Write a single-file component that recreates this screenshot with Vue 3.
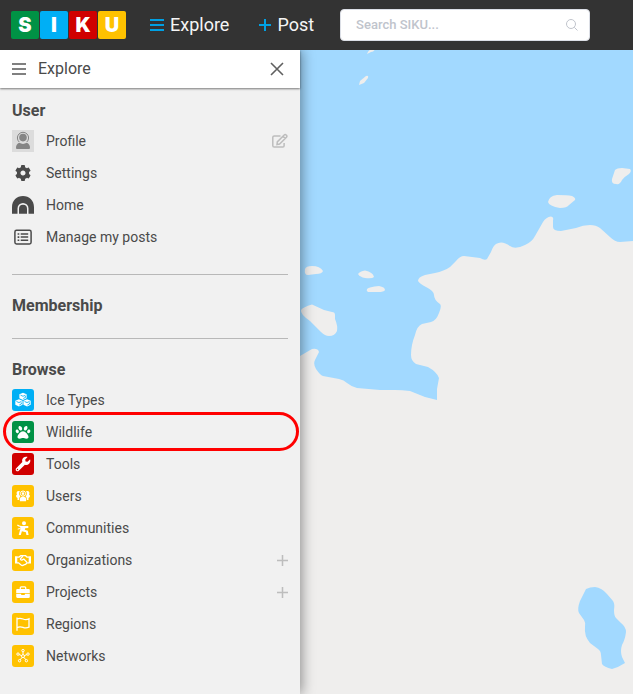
<script setup>
import { ref } from 'vue'

const query = ref('')

const logo = [
  { letter: 'S', tone: 'green' },
  { letter: 'I', tone: 'blue' },
  { letter: 'K', tone: 'red' },
  { letter: 'U', tone: 'yellow' },
]

// Each icon is a list of paths; `line` paths are stroked, the others filled.
const icons = {
  ice: {
    box: '0.7 0.7 20.6 20.6',
    paths: [
      { d: 'M11 4.200l3.400 1.500v3.700L11 11 7.600 9.400V5.700zM7.200 10.200l3.400 1.600v3.700l-3.400 1.700-3.400-1.700v-3.700zM14.800 10.200l3.400 1.600v3.700l-3.400 1.700-3.400-1.700v-3.700z' },
      { d: 'M8.700 6.500L11 7.500l2.300-1M11.300 9.600l2-1V7.400M4.900 12.400l2.300 1 2.300-1M7.500 15.700l2-1v-1.300M12.500 12.400l2.300 1 2.300-1M15.100 15.700l2-1v-1.300', line: true, tint: 'cut-blue' },
    ],
  },
  paw: {
    box: '-128 -138 768 768',
    paths: [{ d: 'M256 224c-79.410 0-192 122.760-192 200.250 0 34.900 26.810 55.750 71.740 55.750 48.840 0 81.090-25.080 120.260-25.080 39.510 0 71.850 25.080 120.260 25.080 44.930 0 71.740-20.850 71.740-55.750C448 346.760 335.410 224 256 224zm-147.280-12.610c-10.400-34.650-42.440-57.090-71.560-50.130-29.120 6.960-44.290 40.690-33.890 75.340 10.400 34.650 42.440 57.090 71.560 50.130 29.120-6.960 44.290-40.690 33.890-75.340zm84.720-20.780c30.940-8.140 42.930-49.080 26.190-91.570s-55.740-70.100-86.680-61.960c-30.950 8.140-42.940 49.080-26.200 91.570 16.740 42.480 55.740 70.100 86.690 61.960zm281.410-29.350c-29.120-6.960-61.150 15.480-71.560 50.130-10.400 34.650 4.770 68.380 33.890 75.340 29.120 6.960 61.150-15.480 71.560-50.130 10.400-34.650-4.770-68.380-33.890-75.340zm-156.270 29.350c30.940 8.140 69.940-19.470 86.680-61.960 16.740-42.490 4.750-83.420-26.190-91.570-30.950-8.140-69.950 19.480-86.690 61.960-16.740 42.490-4.740 83.430 26.200 91.570z' }],
  },
  wrench: {
    box: '-128 -128 768 768',
    paths: [{ d: 'M507.730 109.100c-2.240-9.030-13.540-12.090-20.120-5.510l-74.360 74.360-67.880-11.310-11.310-67.880 74.360-74.360c6.620-6.620 3.430-17.900-5.660-20.160-47.380-11.740-99.550.91-136.580 37.930-39.640 39.640-50.550 97.100-34.050 147.200L18.740 402.760c-24.990 24.990-24.990 65.510 0 90.500 24.990 24.990 65.510 24.990 90.500 0l213.210-213.210c50.120 16.710 107.470 5.680 147.370-34.220 37.070-37.070 49.700-89.320 37.910-136.730zM64 472c-13.250 0-24-10.750-24-24 0-13.260 10.750-24 24-24s24 10.740 24 24c0 13.250-10.750 24-24 24z' }],
  },
  users: {
    box: '0 0 22 22',
    paths: [
      { d: 'M6.800 5.900a2.200 2.200 0 0 1 1.200.4 4 4 0 0 0 .3 5.100c-.9.700-1.200 1.800-1.200 3.700H5.500V12.900c-.9-.3-1.400-.9-1.400-1.900 0-.8.4-1.400 1-1.600a2.100 2.100 0 0 1 1.700-3.500zM15.200 5.900a2.200 2.200 0 0 0-1.200.4 4 4 0 0 1-.3 5.100c.9.700 1.200 1.800 1.200 3.700h1.600V12.900c.9-.3 1.400-.9 1.400-1.900 0-.8-.4-1.400-1-1.600a2.100 2.100 0 0 0-1.700-3.500z' },
      { d: 'M7.900 16.200v-2c0-1.600 1.300-2.400 3.100-2.400s3.100.8 3.100 2.400v2z' },
      { d: 'M11 6a2.600 2.600 0 1 1 0 5.200 2.600 2.600 0 0 1 0-5.200z', line: true },
      { d: 'M11 7.300a1.300 1.300 0 1 1 0 2.600 1.300 1.300 0 0 1 0-2.600z' },
    ],
  },
  community: {
    box: '0 0 22 22',
    paths: [
      { d: 'M12 4.300a2 2 0 1 1 0 4 2 2 0 0 1 0-4zM5.700 7.400c1.500 1 2.900 1.500 4.300 1.500l6.300.2v1.900l-3.100.3-.4 1.500 3 1 .8 4.200h-2.200l-.5-2.700-4-1.100-1.100 3.800H6.700l1.400-5.300.9-1.200-1-.4.5-1C7.200 9.800 6 9.200 5 8.400z' },
      { d: 'M8.700 11.400l-3 .7', line: true },
    ],
  },
  handshake: {
    box: '0 0 22 22',
    paths: [
      { d: 'M3 7.300h2.300v7.200H3zM16.700 7.300H19v7.200h-2.300z' },
      { d: 'M5 8.100h2l1.800-1.400h4.700L15 8.100h2M5 13.800h1.500l2.300 2c1 .8 2.200.8 3 .1l1.700-.5 1.700-1.600H17M10.800 7.300L8.600 9.600c-.5.700.2 1.700 1.200 1.500l2-1 3.100 3.100', line: true, tint: 'bold' },
    ],
  },
  briefcase: {
    box: '0 0 22 22',
    paths: [
      { d: 'M4.200 9.200c0-.8.500-1.300 1.300-1.300h11c.8 0 1.300.5 1.300 1.300v2.700H4.200zM4.200 12.800h5v1.100h3.600v-1.100h5v2.900c0 .8-.5 1.200-1.300 1.200h-11c-.8 0-1.300-.4-1.300-1.200z' },
      { d: 'M8.300 8V6.700c0-.6.3-.9.9-.9h3.600c.6 0 .9.300.9.900V8', line: true, tint: 'bold' },
    ],
  },
  flag: {
    box: '0 0 22 22',
    paths: [{ d: 'M5 4.500v13.200M5 6c2.200-1.100 4-.8 6 0s3.900.8 6-.2v8.400c-2.100 1-4 1-6 .2s-3.800-1-6 .2', line: true, tint: 'bold' }],
  },
  network: {
    box: '0 0 22 22',
    paths: [
      { d: 'M11 9.600a1.500 1.500 0 1 1 0 3 1.500 1.500 0 0 1 0-3zM11 9.500V7M12.500 10.500l2.400-.9M12 12.400l1.700 2.300M10 12.400l-1.700 2.300M9.500 10.500l-2.400-.9M11 4.400a1.200 1.200 0 1 1 0 2.400 1.200 1.200 0 0 1 0-2.400zM16 7.900a1.200 1.200 0 1 1 0 2.400 1.200 1.200 0 0 1 0-2.400zM14.400 14.500a1.200 1.200 0 1 1 0 2.400 1.200 1.200 0 0 1 0-2.400zM7.600 14.500a1.200 1.200 0 1 1 0 2.400 1.200 1.200 0 0 1 0-2.400zM6 7.900a1.200 1.200 0 1 1 0 2.400 1.200 1.200 0 0 1 0-2.400z', line: true },
    ],
  },
  person: {
    box: '0 0 22 22',
    paths: [
      { d: 'M11 3.800a3.800 3.800 0 1 1 0 7.600 3.800 3.800 0 0 1 0-7.600zM7.300 12.800c2.300 1.500 5.100 1.500 7.400 0 2.200.8 3.300 2.600 3.300 4.900 0 .8-.5 1.300-1.200 1.300H5.200c-.7 0-1.200-.5-1.200-1.300 0-2.300 1.100-4.100 3.300-4.900z' },
      { d: 'M7.200 12a5.600 5.600 0 1 1 7.600 0', line: true },
    ],
  },
  gear: {
    box: '-90 -90 692 692',
    paths: [{ d: 'M487.400 315.700l-42.600-24.600c4.300-23.200 4.300-47 0-70.200l42.600-24.600c4.900-2.800 7.100-8.600 5.500-14-11.100-35.600-30-67.800-54.700-94.600-3.800-4.100-10-5.100-14.800-2.300L380.800 110c-17.900-15.400-38.500-27.300-60.800-35.100V25.800c0-5.600-3.900-10.500-9.400-11.700-36.700-8.200-74.300-7.800-109.200 0-5.500 1.200-9.400 6.100-9.400 11.700V75c-22.200 7.900-42.800 19.800-60.800 35.100L88.700 85.500c-4.900-2.800-11-1.900-14.800 2.300-24.700 26.700-43.600 58.900-54.700 94.600-1.700 5.400.6 11.200 5.500 14L67.300 221c-4.300 23.200-4.300 47 0 70.200l-42.600 24.600c-4.900 2.800-7.100 8.600-5.500 14 11.100 35.600 30 67.800 54.700 94.600 3.800 4.100 10 5.100 14.800 2.300l42.600-24.600c17.900 15.400 38.500 27.300 60.800 35.100v49.200c0 5.600 3.900 10.500 9.400 11.700 36.700 8.200 74.300 7.800 109.200 0 5.500-1.200 9.400-6.100 9.400-11.700v-49.200c22.200-7.900 42.800-19.800 60.800-35.100l42.600 24.600c4.900 2.800 11 1.900 14.800-2.300 24.700-26.700 43.600-58.900 54.700-94.600 1.500-5.500-.7-11.300-5.600-14.100zM256 336c-44.100 0-80-35.900-80-80s35.900-80 80-80 80 35.900 80 80-35.900 80-80 80z' }],
  },
  igloo: {
    box: '0 0 22 22',
    paths: [
      { d: 'M0 19.700v-6.500C0 6.400 4.800 2 11 2s11 4.400 11 11.200v6.500h-5.500v-5.200a5.500 5.500 0 0 0-11 0v5.200z' },
      { d: 'M7 19.700v-4.900a4 4 0 0 1 8 0v4.900z' },
    ],
  },
  list: {
    box: '0 0 22 22',
    paths: [
      { d: 'M4.500 4.300h13c1 0 1.600.6 1.600 1.600v10.400c0 1-.6 1.600-1.600 1.600h-13c-1 0-1.600-.6-1.600-1.600V5.900c0-1 .6-1.600 1.600-1.600zM8.700 8h7.500M8.700 11.100h7.500M8.700 14.200h7.500', line: true },
      { d: 'M5.600 7.200h1.700v1.600H5.600zM5.600 10.300h1.700v1.600H5.600zM5.600 13.400h1.700V15H5.600z' },
    ],
  },
}

const sections = [
  {
    title: 'User',
    items: [
      { label: 'Profile', icon: 'person', tone: 'avatar', edit: true },
      { label: 'Settings', icon: 'gear', tone: 'plain' },
      { label: 'Home', icon: 'igloo', tone: 'plain' },
      { label: 'Manage my posts', icon: 'list', tone: 'plain' },
    ],
  },
  { title: 'Membership', items: [] },
  {
    title: 'Browse',
    items: [
      { label: 'Ice Types', icon: 'ice', tone: 'blue' },
      { label: 'Wildlife', icon: 'paw', tone: 'green', marked: true },
      { label: 'Tools', icon: 'wrench', tone: 'red' },
      { label: 'Users', icon: 'users', tone: 'yellow' },
      { label: 'Communities', icon: 'community', tone: 'yellow' },
      { label: 'Organizations', icon: 'handshake', tone: 'yellow', add: true },
      { label: 'Projects', icon: 'briefcase', tone: 'yellow', add: true },
      { label: 'Regions', icon: 'flag', tone: 'yellow' },
      { label: 'Networks', icon: 'network', tone: 'yellow' },
    ],
  },
]
</script>

<template>
  <div class="app">
    <header class="topbar">
      <a class="logo" href="#" aria-label="SIKU">
        <span v-for="t in logo" :key="t.letter" class="tile" :class="t.tone">{{ t.letter }}</span>
      </a>
      <nav class="actions">
        <button type="button" class="action">
          <svg class="action-icon" width="14" height="14" viewBox="0 0 14 14" aria-hidden="true"><path d="M0 2h14M0 7h14M0 12h14" /></svg>
          Explore
        </button>
        <button type="button" class="action">
          <svg class="action-icon" width="12" height="14" viewBox="0 0 12 14" aria-hidden="true"><path d="M0 7h12M6 1v12" /></svg>
          Post
        </button>
      </nav>
      <label class="search">
        <input v-model="query" type="text" placeholder="Search SIKU..." aria-label="Search SIKU" />
        <svg width="12" height="12" viewBox="0 0 12 12" aria-hidden="true"><circle cx="5" cy="5" r="4.500" /><path d="M8.300 8.300l3.200 3.200" /></svg>
      </label>
    </header>

    <main class="body">
      <aside class="panel">
        <div class="panel-head">
          <svg class="menu-icon" width="14" height="12" viewBox="0 0 14 12" aria-hidden="true"><path d="M0 1h14M0 6h14M0 11h14" /></svg>
          <span class="panel-title">Explore</span>
          <button type="button" class="close" aria-label="Close">
            <svg width="12" height="12" viewBox="0 0 12 12" aria-hidden="true"><path d="M0 0l12 12M12 0L0 12" /></svg>
          </button>
        </div>

        <section v-for="s in sections" :key="s.title" class="section">
          <h2>{{ s.title }}</h2>
          <ul v-if="s.items.length">
            <li v-for="item in s.items" :key="item.label" :class="{ marked: item.marked }">
              <a href="#">
                <svg class="icon" :class="item.tone" width="22" height="22" :viewBox="icons[item.icon].box" aria-hidden="true">
                  <path v-for="(p, i) in icons[item.icon].paths" :key="i" :d="p.d" :class="[p.line ? 'line' : 'solid', p.tint]" />
                </svg>
                {{ item.label }}
              </a>
              <button v-if="item.edit" type="button" class="row-action" aria-label="Edit profile">
                <svg width="16" height="16" viewBox="0 0 16 16" aria-hidden="true">
                  <path d="M8.500 3H2.200C1.300 3 .8 3.500.8 4.300v8.500c0 .8.500 1.300 1.400 1.300h8.600c.8 0 1.300-.5 1.300-1.300V10" />
                  <path d="M5.300 8.900l6.900-6.900c.6-.6 1.300-.6 1.900 0l.4.400c.6.600.6 1.200 0 1.800l-6.900 6.900-2.600.400zM11 3.200l2.300 2.300" />
                </svg>
              </button>
              <button v-if="item.add" type="button" class="row-action" :aria-label="'Add to ' + item.label">
                <svg width="11" height="11" viewBox="0 0 11 11" aria-hidden="true"><path d="M0 5.500h11M5.500 0v11" /></svg>
              </button>
            </li>
          </ul>
        </section>
      </aside>

      <div class="map">
        <svg viewBox="300 50 333 644" preserveAspectRatio="xMinYMin slice" role="img" aria-label="Map">
          <g class="land">
            <path d="M633 241L620 242Q615 242 610 237L600 228Q596 225 590 225Q583 225 576 228L561 231Q553 231 553 227V220Q554 217 551 216.500Q546 217 543 222L535 236Q532 242 525 245Q515 250 510 246Q502 240 496 244Q493 246 491 252L487 259Q485 261 480 258L464 256Q460 256 456 261L450 267Q444 271 435 273L425 275Q418 277 418 281Q420 284 426 287Q434 291 434 295Q434 300 440 304Q442 306 439 313Q436 321 431 322L422 324Q417 326 415 335Q411 345 411 355Q411 361 416 364L428 367Q437 372 439 378L437 389V400L425 397L410 391Q402 390 395 390L380 390L357 388Q352 387 347 383Q344 380 339 379L323 376Q320 375 316 369Q313 364 315 360L319 352Q318 348 312 349L300 356V694H633Z" />
            <path d="M305 269Q306 266 312 266Q320 266 323 271Q322 274 316 274L308 275Q304 275 305 269Z" />
            <path d="M358 274Q360 271 365 270.500Q373 272 374 277Q372 279 365 278Q360 277 358 274Z" />
            <path d="M367 289Q369 287 379 286Q385 287 385 290Q384 292 378 292H368Q366 291 367 289Z" />
            <path d="M301 310Q303 307 312 304.500L324 310L332 312Q335 312 335 315V319Q338 326 337 331Q335 336 329 336Q325 336 321 332L310 321Q300 314 301 310Z" />
            <path d="M548 202Q549 196 557 195Q567 195 572 196Q576 198 575 200L569 205Q567 208 560 208Q549 206 548 202Z" />
            <path d="M612 179L615 170Q617 168 622 168L630 169Q632 171 629 174Q624 177 622 180Q620 185 616 184Q611 184 612 179Z" />
            <path d="M359 85L360 81L366 76Q369 75 368 78L364 83Z" />
            <path d="M367 54Q368 51 371 49H375Q374 52 371 52Z" />
          </g>
          <path class="lake" d="M586 589Q590 587 595 587Q602 588 607 594L613 601Q615 604 614 610Q614 616 616 618L621 623Q626 627 626 632Q625 640 622 645Q620 651 622 657L625 663Q619 667 612 669Q604 667 602 664L601 655Q601 651 598 649L590 643Q584 636 585 627Q586 623 584 620L579 613Q577 609 580 601Z" />
        </svg>
      </div>
    </main>
  </div>
</template>

<style>
body {
  margin: 0;
}
</style>

<style scoped>
.app {
  display: flex;
  flex-direction: column;
  min-height: 100vh;
  color: #4a4a4a;
  font-family: Roboto, "Liberation Sans", sans-serif;
}

button {
  padding: 0;
  border: 0;
  background: none;
  color: inherit;
  font: inherit;
  cursor: pointer;
}

a {
  color: inherit;
  text-decoration: none;
}

svg {
  display: block;
  flex: none;
  fill: none;
}

.topbar {
  display: flex;
  align-items: center;
  box-sizing: border-box;
  height: 50px;
  padding: 0 11px;
  background: #333;
}

.logo {
  display: flex;
  gap: 1px;
}

.tile {
  width: 28px;
  border-radius: 2px;
  color: #fff;
  font: 900 20px/28px Inter, Lato, sans-serif;
  text-align: center;
}

.green {
  background: #009245;
}

.blue {
  background: #00aff5;
}

.red {
  background: #d00000;
}

.yellow {
  background: #ffc200;
}

.actions {
  display: flex;
  gap: 30px;
  margin-left: 24px;
}

.action {
  display: flex;
  align-items: center;
  gap: 6px;
  color: #f5f5f5;
  font-size: 18px;
  line-height: 24px;
}

.action-icon {
  stroke: #00a0e3;
  stroke-width: 2;
}

.search {
  display: flex;
  align-items: center;
  box-sizing: border-box;
  flex: 0 1 250px;
  min-width: 0;
  height: 32px;
  margin-left: 26px;
  padding: 0 11px 0 15px;
  border: 1px solid #dcdfe6;
  border-radius: 4px;
  background: #fff;
}

.search input {
  flex: 1;
  min-width: 0;
  padding: 0;
  border: 0;
  outline: 0;
  background: none;
  color: #4a4a4a;
  font: 500 13px/20px Roboto, sans-serif;
}

.search input::placeholder {
  color: #c0c4cc;
}

.search svg {
  stroke: #c0c4cc;
}

.body {
  display: flex;
  flex: 1;
}

.panel {
  position: relative;
  z-index: 1;
  flex: 0 0 300px;
  background: #f1f1f1;
  box-shadow: 2px 0 12px rgba(0, 0, 0, 0.4);
  clip-path: inset(0 -20px 0 0);
}

.panel-head {
  display: flex;
  align-items: center;
  box-sizing: border-box;
  height: 38px;
  padding: 0 16px 0 12px;
  background: #fff;
  box-shadow: 0 1px 2px rgba(0, 0, 0, 0.5);
}

.menu-icon {
  stroke: #808080;
  stroke-width: 2;
}

.panel-title {
  flex: 1;
  margin-left: 12px;
  font-size: 16px;
  line-height: 24px;
}

.close {
  padding: 1px;
}

.close svg {
  overflow: visible;
  stroke: #606060;
  stroke-width: 1.600;
}

.section {
  margin: 0 12px;
  padding: 17px 0 18px;
}

.section:first-of-type {
  padding: 9px 0 21px;
}

.section + .section {
  border-top: 1px solid #b8b8b8;
}

h2 {
  margin: 0;
  font-size: 16px;
  font-weight: 700;
  line-height: 28px;
}

ul {
  margin: 0;
  padding: 0;
  list-style: none;
}

li {
  position: relative;
  display: flex;
  align-items: center;
  height: 32px;
}

li a {
  display: flex;
  flex: 1;
  align-items: center;
  gap: 12px;
  font-size: 14px;
  line-height: 20px;
}

.marked::after {
  position: absolute;
  inset: -4px -11px -3px -9px;
  border: 3px solid #f00;
  border-radius: 20px;
  content: "";
  pointer-events: none;
}

.icon {
  border-radius: 3px;
  color: #fff;
}

.icon.plain {
  border-radius: 0;
  color: #4a4a4a;
}

.icon.avatar {
  border-radius: 0;
  background: #dcdcdc;
  color: #858585;
}

.solid {
  fill: currentColor;
}

.line {
  stroke: currentColor;
  stroke-width: 1;
}

.line.bold {
  stroke-width: 1.300;
}

.plain .line {
  stroke-width: 1.500;
}

.line.cut-blue {
  stroke: #00aff5;
  stroke-width: 0.800;
}

.row-action svg {
  stroke: #bdbdbd;
  stroke-width: 1.500;
}

.map {
  position: relative;
  flex: 1;
  min-width: 0;
  overflow: hidden;
  background: #a2d9ff;
}

.map svg {
  position: absolute;
  width: 100%;
  height: 100%;
}

.land {
  fill: #efeeed;
}

.lake {
  fill: #a2d9ff;
}
</style>
